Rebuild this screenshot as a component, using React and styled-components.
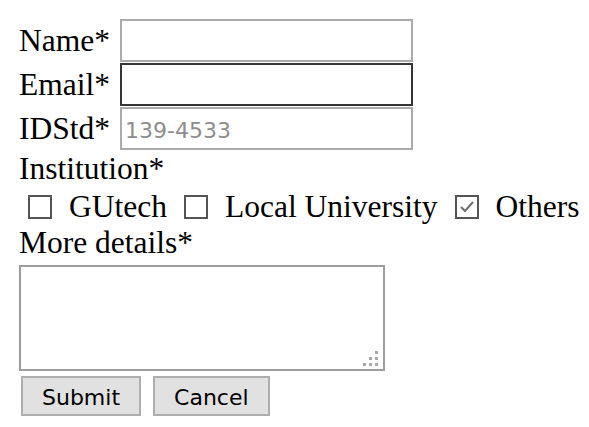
import styled, { createGlobalStyle } from "styled-components";
import { useState } from "react";

const GlobalStyle = createGlobalStyle`
  body {
    margin: 0;
    background: #fff;
    color: #000;
    font-family: "Liberation Serif", "Times New Roman", serif;
    font-size: 31.5px;
  }
`;

const institutions = ["GUtech", "Local University", "Others"];

const App = () => {
  const [checked, setChecked] = useState({ Others: true });

  const toggle = (name) => {
    setChecked((prev) => ({ ...prev, [name]: !prev[name] }));
  };

  return (
    <>
      <GlobalStyle />
      <Form onSubmit={(e) => e.preventDefault()}>
        <Fields>
          <FieldRow>
            <Label htmlFor="name">Name*</Label>
            <TextInput id="name" type="text" />
          </FieldRow>
          <FieldRow>
            <Label htmlFor="email">Email*</Label>
            <TextInput id="email" type="email" $active />
          </FieldRow>
          <FieldRow>
            <Label htmlFor="idstd">IDStd*</Label>
            <TextInput id="idstd" type="text" placeholder="139-4533" />
          </FieldRow>
        </Fields>

        <SectionLabel>Institution*</SectionLabel>
        <OptionRow>
          {institutions.map((name) => (
            <Option key={name}>
              <HiddenCheck
                type="checkbox"
                checked={!!checked[name]}
                onChange={() => toggle(name)}
              />
              <Box aria-hidden="true">
                {checked[name] && (
                  <svg width="20" height="20" viewBox="0 0 20 20">
                    <path
                      d="M4 10 L8 14 L16 5"
                      fill="none"
                      stroke="#6e6e6e"
                      strokeWidth="2"
                    />
                  </svg>
                )}
              </Box>
              {name}
            </Option>
          ))}
        </OptionRow>

        <SectionLabel as="label" htmlFor="details">More details*</SectionLabel>
        <AreaWrap>
          <TextArea id="details" />
          <Grip width="15" height="15" viewBox="0 0 15 15" aria-hidden="true">
            <rect x="12" y="0" width="3" height="3" />
            <rect x="6" y="6" width="3" height="3" />
            <rect x="12" y="6" width="3" height="3" />
            <rect x="0" y="12" width="3" height="3" />
            <rect x="6" y="12" width="3" height="3" />
            <rect x="12" y="12" width="3" height="3" />
          </Grip>
        </AreaWrap>

        <Buttons>
          <Button type="submit">Submit</Button>
          <Button type="button">Cancel</Button>
        </Buttons>
      </Form>
    </>
  );
};

const Form = styled.form`
  display: flex;
  flex-direction: column;
  align-items: flex-start;
  padding: 19px 0 0 19px;
`;

const Fields = styled.div`
  display: flex;
  flex-direction: column;
  gap: 1px;
  margin-bottom: 1px;
`;

const FieldRow = styled.div`
  display: flex;
  align-items: center;
  gap: 10px;
  height: 43px;
`;

const Label = styled.label`
  line-height: 36px;
  white-space: nowrap;
`;

const TextInput = styled.input`
  box-sizing: border-box;
  width: 293px;
  height: 43px;
  margin: 0;
  padding: 4px 3px 0;
  border: 2px solid ${(p) => (p.$active ? "#353535" : "#ababab")};
  border-radius: 0;
  background: #fff;
  font-family: "DejaVu Sans", Verdana, sans-serif;
  font-size: 22px;
  color: #000;
  outline: none;

  &::placeholder {
    color: #8d8d8d;
  }
`;

const SectionLabel = styled.div`
  line-height: 36px;
`;

const OptionRow = styled.div`
  box-sizing: border-box;
  display: flex;
  align-items: center;
  height: 38px;
  padding: 2px 0 0 9px;
  line-height: 36px;
`;

const Option = styled.label`
  display: flex;
  align-items: center;
  gap: 17px;
  margin-right: 17px;
  white-space: nowrap;
  cursor: default;
`;

const HiddenCheck = styled.input`
  position: absolute;
  opacity: 0;
  width: 0;
  height: 0;
  margin: 0;
`;

const Box = styled.span`
  box-sizing: border-box;
  display: flex;
  align-items: center;
  justify-content: center;
  width: 24px;
  height: 24px;
  border: 2px solid #555;
  background: #fff;
`;

const AreaWrap = styled.div`
  position: relative;
  width: 366px;
  height: 106px;
  margin-top: 4px;
`;

const TextArea = styled.textarea`
  box-sizing: border-box;
  display: block;
  width: 100%;
  height: 100%;
  margin: 0;
  padding: 3px;
  border: 2px solid #9d9d9d;
  border-radius: 0;
  resize: none;
  outline: none;
  font-family: "DejaVu Sans", Verdana, sans-serif;
  font-size: 22px;
`;

const Grip = styled.svg`
  position: absolute;
  right: 7px;
  bottom: 5px;
  fill: #a8a8a8;
  pointer-events: none;
`;

const Buttons = styled.div`
  display: flex;
  gap: 12px;
  margin-top: 5px;
  padding-left: 2px;
`;

const Button = styled.button`
  box-sizing: border-box;
  height: 40px;
  margin: 0;
  padding: 4px 19px 0;
  border: 2px solid #adadad;
  border-radius: 0;
  background: #e1e1e1;
  color: #000;
  font-family: "DejaVu Sans", Verdana, sans-serif;
  font-size: 22px;
  line-height: 1;
`;

export default App;
